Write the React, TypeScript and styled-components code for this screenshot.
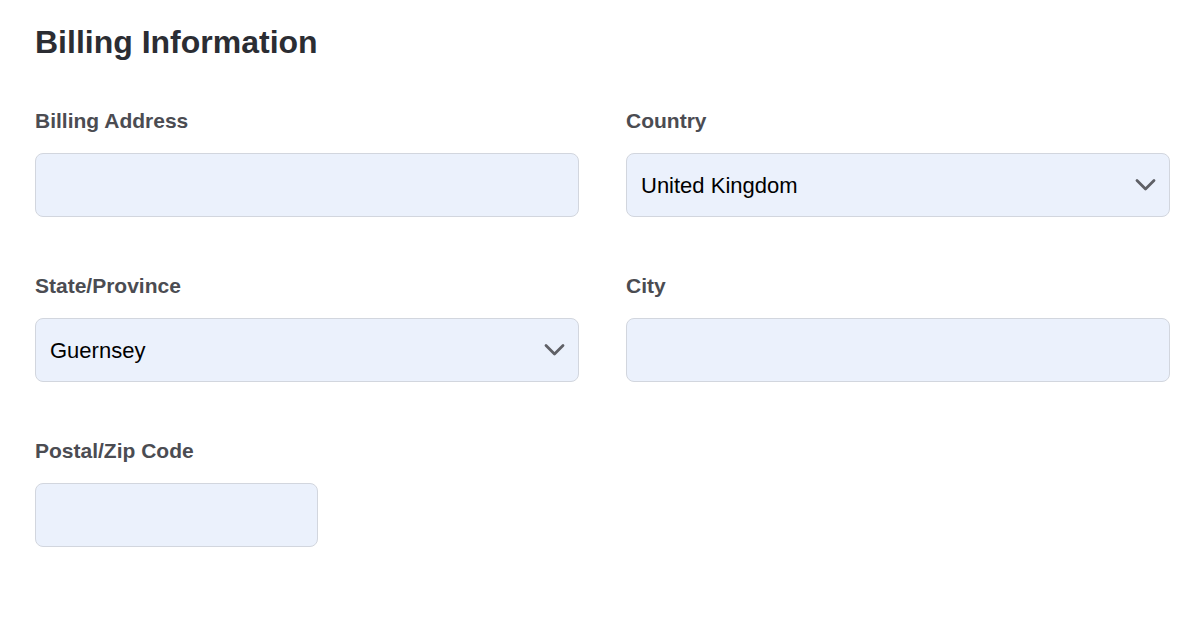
import React from "react";
import styled, { createGlobalStyle } from "styled-components";

const Global = createGlobalStyle`
  html, body { margin: 0; padding: 0; background: #ffffff; }
  body { font-family: "Liberation Sans", Arial, Helvetica, sans-serif; }
  * { box-sizing: border-box; }
`;

const Page = styled.div`
  padding: 22px 30px 0 35px;
  width: 1200px;
  height: 622px;
  background: #ffffff;
`;

const Title = styled.h1`
  margin: 0 0 47px 0;
  font-size: 32px;
  line-height: 40px;
  font-weight: 700;
  color: #2b2d33;
`;

const Grid = styled.div`
  display: grid;
  grid-template-columns: 544px 544px;
  column-gap: 47px;
  row-gap: 57px;
`;

const Field = styled.div`
  display: flex;
  flex-direction: column;
  gap: 20px;
`;

const Label = styled.label`
  font-size: 21px;
  line-height: 24px;
  font-weight: 700;
  color: #4b4c52;
`;

const TextInput = styled.input<{ $width?: number }>`
  width: ${(p) => (p.$width ? `${p.$width}px` : "100%")};
  height: 64px;
  padding: 0 14px;
  border: 1px solid #d2d6de;
  border-radius: 8px;
  background: #ebf1fc;
  font-family: "Liberation Sans", Arial, sans-serif;
  font-size: 22px;
  color: #000;
  outline: none;
`;

const SelectWrap = styled.div`
  position: relative;
  width: 100%;
`;

const Select = styled.select`
  appearance: none;
  -webkit-appearance: none;
  width: 100%;
  height: 64px;
  padding: 0 50px 0 14px;
  border: 1px solid #d2d6de;
  border-radius: 8px;
  background: #ebf1fc;
  font-family: "Liberation Sans", Arial, sans-serif;
  font-size: 22px;
  color: #000;
  outline: none;
`;

const Chevron = styled.svg`
  position: absolute;
  right: 14px;
  top: 25px;
  width: 21px;
  height: 14px;
  pointer-events: none;
`;

const ChevronIcon = () => (
  <Chevron viewBox="0 0 21 14" fill="none">
    <path d="M2 2.5 L10.5 11 L19 2.5" stroke="#5f6066" strokeWidth="2.8" strokeLinecap="round" strokeLinejoin="round" />
  </Chevron>
);

const SelectField = ({ value, options }: { value: string; options: string[] }) => (
  <SelectWrap>
    <Select defaultValue={value}>
      {options.map((o) => (
        <option key={o} value={o}>
          {o}
        </option>
      ))}
    </Select>
    <ChevronIcon />
  </SelectWrap>
);

export default function App() {
  return (
    <>
      <Global />
      <Page>
        <Title>Billing Information</Title>
        <Grid>
          <Field>
            <Label>Billing Address</Label>
            <TextInput type="text" />
          </Field>
          <Field>
            <Label>Country</Label>
            <SelectField value="United Kingdom" options={["United Kingdom", "United States", "France"]} />
          </Field>
          <Field>
            <Label>State/Province</Label>
            <SelectField value="Guernsey" options={["Guernsey", "Jersey", "England"]} />
          </Field>
          <Field>
            <Label>City</Label>
            <TextInput type="text" />
          </Field>
          <Field>
            <Label>Postal/Zip Code</Label>
            <TextInput type="text" $width={283} />
          </Field>
        </Grid>
      </Page>
    </>
  );
}
